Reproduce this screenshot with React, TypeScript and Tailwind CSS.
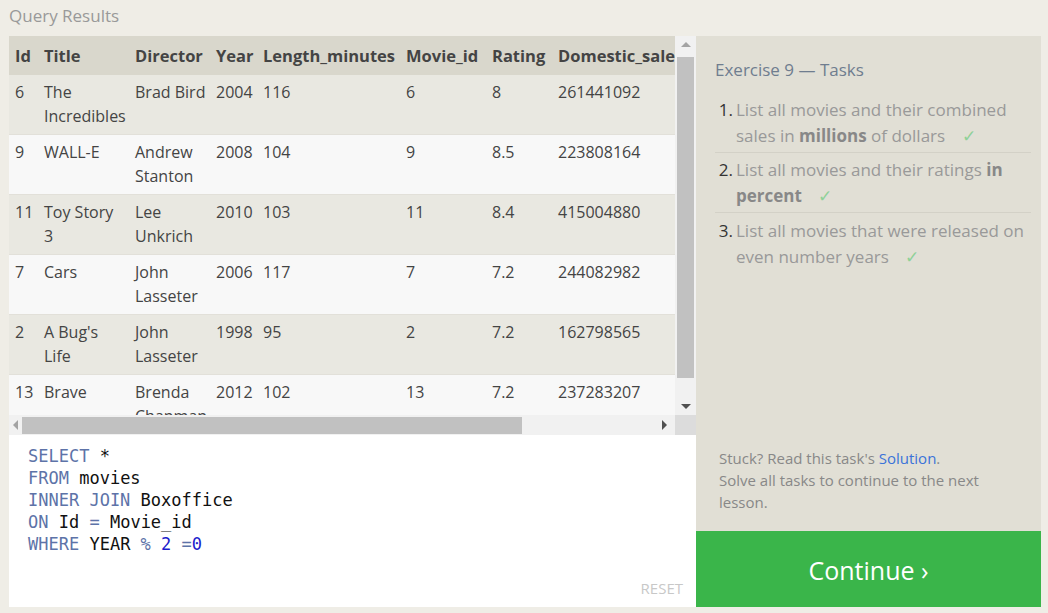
import React from 'react';

const font = "font-['Open_Sans',sans-serif]";
const mono = "font-['DejaVu_Sans_Mono',monospace]";

interface Movie {
  id: number;
  title: string;
  director: string;
  year: number;
  length: number;
  movieId: number;
  rating: string;
  domestic: number;
  international: number;
}

const movies: Movie[] = [
  { id: 6, title: 'The Incredibles', director: 'Brad Bird', year: 2004, length: 116, movieId: 6, rating: '8', domestic: 261441092, international: 370001000 },
  { id: 9, title: 'WALL-E', director: 'Andrew Stanton', year: 2008, length: 104, movieId: 9, rating: '8.5', domestic: 223808164, international: 297503696 },
  { id: 11, title: 'Toy Story 3', director: 'Lee Unkrich', year: 2010, length: 103, movieId: 11, rating: '8.4', domestic: 415004880, international: 648167031 },
  { id: 7, title: 'Cars', director: 'John Lasseter', year: 2006, length: 117, movieId: 7, rating: '7.2', domestic: 244082982, international: 217900167 },
  { id: 2, title: "A Bug's Life", director: 'John Lasseter', year: 1998, length: 95, movieId: 2, rating: '7.2', domestic: 162798565, international: 200600000 },
  { id: 13, title: 'Brave', director: 'Brenda Chapman', year: 2012, length: 102, movieId: 13, rating: '7.2', domestic: 237283207, international: 301700000 },
];

const cols = [
  { label: 'Id', w: 'w-[29px]' },
  { label: 'Title', w: 'w-[91px]' },
  { label: 'Director', w: 'w-[81px]' },
  { label: 'Year', w: 'w-[47px]' },
  { label: 'Length_minutes', w: 'w-[143px]' },
  { label: 'Movie_id', w: 'w-[86px]' },
  { label: 'Rating', w: 'w-[66px]' },
  { label: 'Domestic_sales', w: 'w-[140px]' },
  { label: 'International_sales', w: 'w-[160px]' },
];

function Tasks() {
  const check = <span className="ml-3 text-[#8fd198]">✓</span>;
  return (
    <ol className="mt-[16px] text-[17px] leading-[26px] text-[#999]">
      <li className="flex border-b border-[#d3d1c7] pb-[3px]">
        <span className="w-[21px] text-[#333] text-right pr-[3px]">1.</span>
        <span className="flex-1">
          List all movies and their combined sales in <b className="text-[#888]">millions</b> of dollars {check}
        </span>
      </li>
      <li className="flex border-b border-[#d3d1c7] pt-[4px] pb-[3px]">
        <span className="w-[21px] text-[#333] text-right pr-[3px]">2.</span>
        <span className="flex-1">
          List all movies and their ratings <b className="text-[#888]">in percent</b> {check}
        </span>
      </li>
      <li className="flex pt-[5px]">
        <span className="w-[21px] text-[#333] text-right pr-[3px]">3.</span>
        <span className="flex-1">List all movies that were released on even number years {check}</span>
      </li>
    </ol>
  );
}

function Scrollbars() {
  return (
    <>
      {/* vertical */}
      <div className="absolute right-0 top-0 bottom-[20px] w-[21px] bg-[#f1f1f1] flex flex-col items-center">
        <div className="h-[17px] flex items-center justify-center">
          <div className="w-0 h-0 border-l-[5px] border-r-[5px] border-b-[5px] border-l-transparent border-r-transparent border-b-[#a3a3a3]" />
        </div>
        <div className="w-[17px] mt-[4px] h-[321px] bg-[#c1c1c1]" />
        <div className="flex-1" />
        <div className="h-[17px] flex items-center justify-center">
          <div className="w-0 h-0 border-l-[5px] border-r-[5px] border-t-[5px] border-l-transparent border-r-transparent border-t-[#505050]" />
        </div>
      </div>
      {/* horizontal */}
      <div className="absolute left-0 right-[21px] bottom-0 h-[20px] bg-[#f1f1f1] flex items-center">
        <div className="w-[13px] flex justify-center">
          <div className="w-0 h-0 border-t-[5px] border-b-[5px] border-r-[5px] border-t-transparent border-b-transparent border-r-[#a3a3a3]" />
        </div>
        <div className="h-[17px] w-[500px] bg-[#c1c1c1]" />
        <div className="flex-1" />
        <div className="w-[21px] flex justify-center">
          <div className="w-0 h-0 border-t-[5px] border-b-[5px] border-l-[5px] border-t-transparent border-b-transparent border-l-[#505050]" />
        </div>
      </div>
      <div className="absolute right-0 bottom-0 w-[21px] h-[20px] bg-[#dcdcdc]" />
    </>
  );
}

export default function App() {
  const td = 'pl-[6px] pr-0 pt-[5px] pb-[6px]';
  return (
    <div className={`${font} w-[1048px] h-[613px] bg-[#efede6] overflow-hidden`}>
      <div className="h-[36px] pl-[9px] pt-[3px] text-[17px] text-[#999]">Query Results</div>
      <div className="flex ml-[9px] h-[571px] w-[1032px]">
        {/* left column */}
        <div className="w-[687px] flex flex-col">
          <div className="relative h-[399px] bg-[#f8f8f8] overflow-hidden">
            <div className="h-[379px] w-[666px] overflow-hidden">
              <table className="table-fixed border-collapse text-[16px] leading-[24px] text-[#444] w-[843px]">
                <thead>
                  <tr className="bg-[#d9d7cc]">
                    {cols.map((c) => (
                      <th key={c.label} className={`${c.w} text-left font-bold text-[16.5px] pl-[6px] pr-0 pt-[8px] pb-[7px] whitespace-nowrap`}>
                        {c.label}
                      </th>
                    ))}
                  </tr>
                </thead>
                <tbody>
                  {movies.map((m, i) => (
                    <tr key={m.id} className={`${i % 2 === 0 ? 'bg-[#e9e8e1]' : 'bg-[#f8f8f8]'} border-b border-[#e2e0d9] align-top`}>
                      <td className={td}>{m.id}</td>
                      <td className={`${td} pr-[8px]`}>{m.title}</td>
                      <td className={td}>{m.director}</td>
                      <td className={td}>{m.year}</td>
                      <td className={td}>{m.length}</td>
                      <td className={td}>{m.movieId}</td>
                      <td className={td}>{m.rating}</td>
                      <td className={td}>{m.domestic}</td>
                      <td className={td}>{m.international}</td>
                    </tr>
                  ))}
                </tbody>
              </table>
            </div>
            <Scrollbars />
          </div>
          {/* editor */}
          <div className="flex-1 bg-white flex flex-col pl-[19px] pt-[10px] pr-[13px] pb-[10px]">
            <pre className={`${mono} text-[17px] leading-[22px] text-[#111]`}>
              <span className="text-[#5d73a8]">SELECT</span> *{'\n'}
              <span className="text-[#5d73a8]">FROM</span> movies{'\n'}
              <span className="text-[#5d73a8]">INNER JOIN</span> Boxoffice{'\n'}
              <span className="text-[#5d73a8]">ON</span> Id <span className="text-[#5d73a8]">=</span> Movie_id{'\n'}
              <span className="text-[#5d73a8]">WHERE</span> YEAR <span className="text-[#5d73a8]">%</span>{' '}
              <span className="text-[#1c1ccc]">2</span> <span className="text-[#5d73a8]">=</span>
              <span className="text-[#1c1ccc]">0</span>
            </pre>
            <div className="flex-1" />
            <div className="self-end text-[15px] leading-[18px] text-[#c8c8c8]">RESET</div>
          </div>
        </div>
        {/* right column */}
        <div className="w-[345px] bg-[#e1dfd5] flex flex-col">
          <div className="flex-1 flex flex-col pl-[19px] pr-[10px] pt-[23px]">
            <div className="text-[17px] leading-[22px] text-[#6f7d8f]">Exercise 9 — Tasks</div>
            <Tasks />
            <div className="flex-1" />
            <div className="pl-[4px] pb-[18px] w-[285px] text-[15px] leading-[22px] text-[#888]">
              Stuck? Read this task's <span className="text-[#3b73d9]">Solution</span>.
              <br />
              Solve all tasks to continue to the next lesson.
            </div>
          </div>
          <div className="h-[76px] bg-[#3ab54a] flex items-center justify-center pt-[4px] text-white text-[25px]">
            Continue ›
          </div>
        </div>
      </div>
    </div>
  );
}
